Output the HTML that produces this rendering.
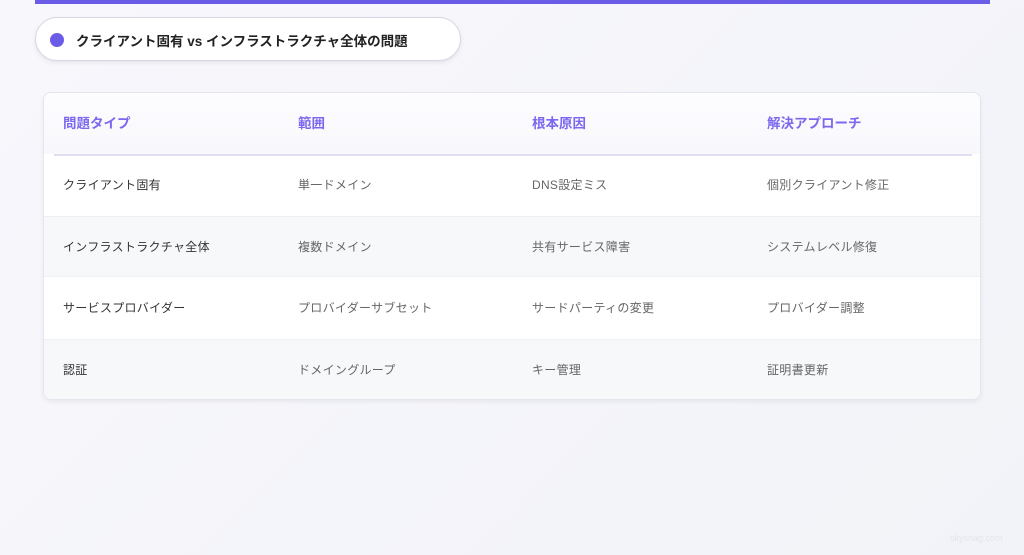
<!DOCTYPE html>
<html><head><meta charset="utf-8"><style>
*{margin:0;padding:0;box-sizing:border-box}
body{width:1024px;height:555px;overflow:hidden;background:linear-gradient(135deg,#f8f7fc,#f1f3f8);font-family:"Liberation Sans","Noto Sans CJK JP",sans-serif;position:relative}
.bar{position:absolute;left:35px;top:0;width:955px;height:4px;background:#6b5ce7}
.pill{position:absolute;left:35px;top:17px;width:426px;height:44px;border-radius:22px;background:#fff;border:1px solid #d3d8e4;box-shadow:0 2px 4px rgba(0,0,0,.07)}
.dot{position:absolute;left:14px;top:15px;width:14px;height:14px;border-radius:50%;background:#6b5ce7}
.pill span{position:absolute;left:40px;top:12px;font-size:13.5px;font-weight:bold;color:#222}
.card{position:absolute;left:43px;top:92px;width:938px;height:308px;border-radius:8px;background:#fff;border:1px solid #e4e6ee;box-shadow:0 2px 5px rgba(0,0,0,.06);overflow:hidden}
.row{position:absolute;left:0;width:938px;height:61px}
.row div{position:absolute;top:0;line-height:61px;font-size:12px;color:#666;letter-spacing:.3px}
.row div:first-child{color:#333}
.h div{font-size:13.5px;font-weight:bold;color:#7b68ee!important;letter-spacing:0}
.h{background:linear-gradient(#fdfcff,#f8f8fc)}
.line{position:absolute;left:10px;top:61px;width:918px;height:2px;background:#e2def2}
.g{background:#f7f8fa;border-top:1px solid #eef0f3;border-bottom:1px solid #eef0f3}
.c1{left:19px}.c2{left:254px}.c3{left:488px}.c4{left:723px}
.wm{position:absolute;left:950px;top:533px;font-size:9px;color:#e2e5ea}
</style></head><body>
<div class="bar"></div>
<div class="pill"><div class="dot"></div><span>クライアント固有 vs インフラストラクチャ全体の問題</span></div>
<div class="card">
<div class="row h" style="top:0"><div class="c1">問題タイプ</div><div class="c2">範囲</div><div class="c3">根本原因</div><div class="c4">解決アプローチ</div></div>
<div class="line"></div>
<div class="row" style="top:62px"><div class="c1">クライアント固有</div><div class="c2">単一ドメイン</div><div class="c3">DNS設定ミス</div><div class="c4">個別クライアント修正</div></div>
<div class="row g" style="top:123px"><div class="c1">インフラストラクチャ全体</div><div class="c2">複数ドメイン</div><div class="c3">共有サービス障害</div><div class="c4">システムレベル修復</div></div>
<div class="row" style="top:185px"><div class="c1">サービスプロバイダー</div><div class="c2">プロバイダーサブセット</div><div class="c3">サードパーティの変更</div><div class="c4">プロバイダー調整</div></div>
<div class="row g" style="top:246px"><div class="c1">認証</div><div class="c2">ドメイングループ</div><div class="c3">キー管理</div><div class="c4">証明書更新</div></div>
</div>
<div class="wm">skysnag.com</div>
</body></html>
